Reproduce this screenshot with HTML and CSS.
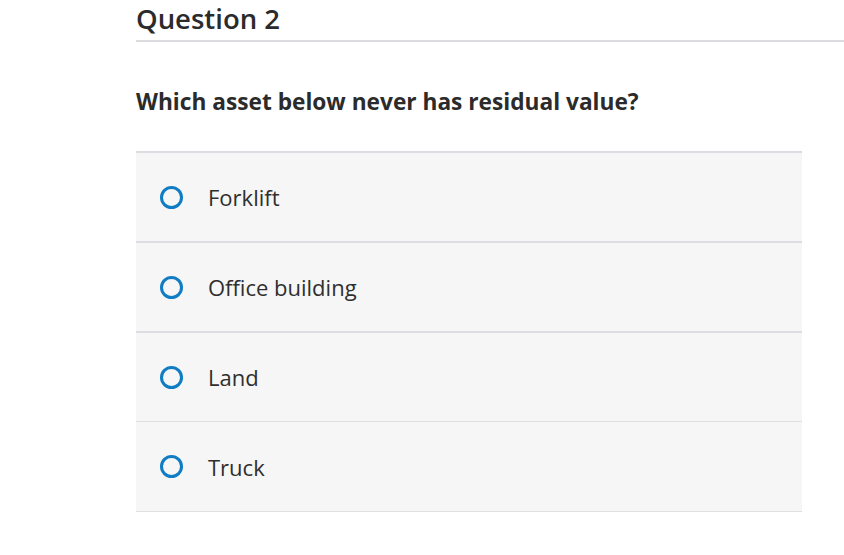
FILE: index.html
```html
<!DOCTYPE html>
<html>
<head>
<meta charset="utf-8">
<link rel="stylesheet" href="styles.css">
</head>
<body>
<main class="page">
  <h2 class="q-title">Question 2</h2>
  <p class="q-prompt">Which asset below never has residual value?</p>
  <ul class="choices">
    <li class="choice choice--thick"><span class="radio"></span><span class="label">Forklift</span></li>
    <li class="choice choice--thick"><span class="radio"></span><span class="label">Office building</span></li>
    <li class="choice"><span class="radio"></span><span class="label">Land</span></li>
    <li class="choice"><span class="radio"></span><span class="label">Truck</span></li>
  </ul>
</main>
</body>
</html>
```

FILE: styles.css
```css
html, body {
  margin: 0;
  padding: 0;
  background: #ffffff;
}
.page {
  padding-left: 136px;
  font-family: "Open Sans", "Lato", sans-serif;
  color: #2b2b2b;
}
.q-title {
  margin: 0;
  padding-top: 0;
  height: 40px;
  font-size: 27.5px;
  font-weight: 600;
  line-height: 38px;
  border-bottom: 2px solid #dcdce0;
}
.q-prompt {
  margin: 0;
  padding-top: 44px;
  height: 65px;
  font-size: 22.7px;
  font-weight: 700;
  line-height: 32px;
}
.choices {
  list-style: none;
  margin: 0;
  padding: 0;
  width: 666px;
  background: #f6f6f6;
  border-top: 2px solid #dcdce2;
  border-bottom: 1px solid #e0e0e0;
}
.choice {
  display: flex;
  align-items: center;
  height: 88px;
  padding-left: 24px;
  border-bottom: 1px solid #e0e0e0;
}
.choice--thick {
  height: 88px;
  border-bottom: 2px solid #dcdce2;
}
.choice:last-child {
  border-bottom: none;
  height: 89px;
}
.radio {
  box-sizing: border-box;
  width: 23px;
  height: 23px;
  border: 3px solid #0f7cc4;
  border-radius: 50%;
  flex: none;
}
.label {
  margin-left: 25px;
  font-size: 22px;
  line-height: 28px;
  color: #2f2f2f;
}
```
